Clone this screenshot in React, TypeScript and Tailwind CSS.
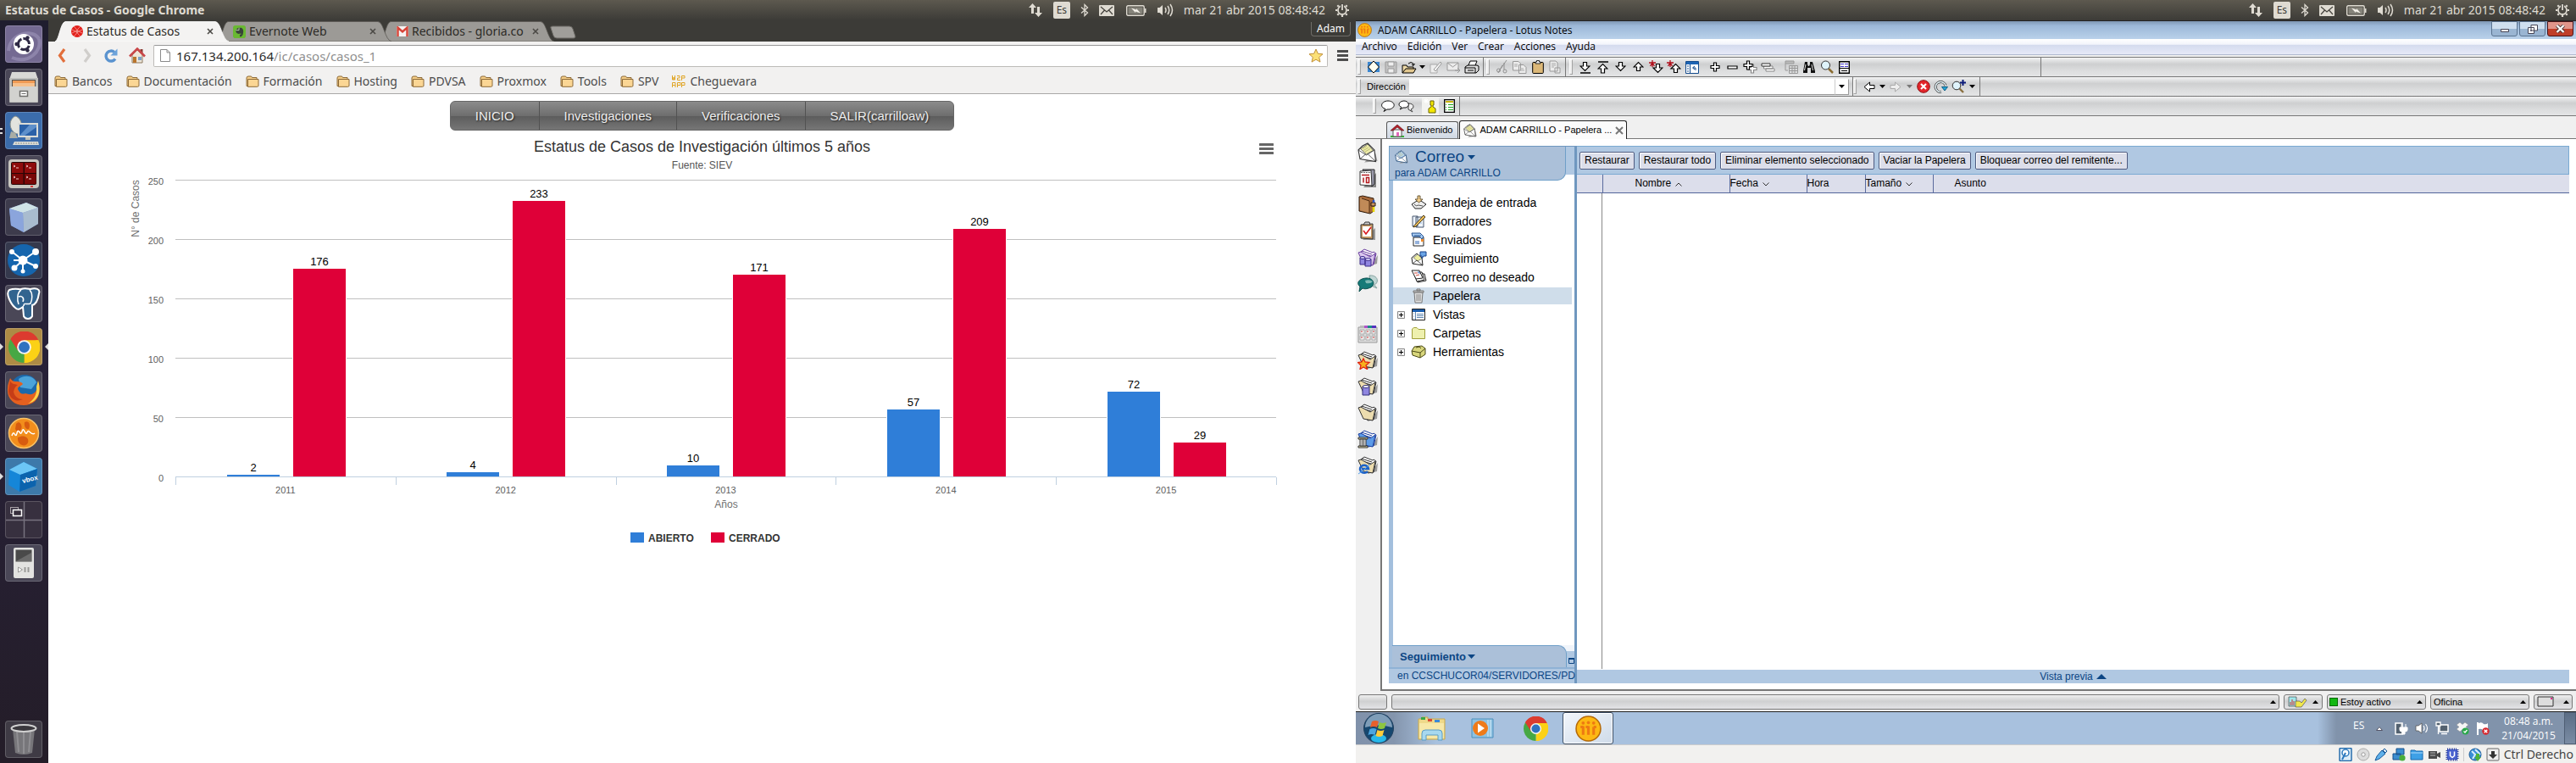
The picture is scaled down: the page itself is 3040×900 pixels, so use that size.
import React from "react";

const UBUNTU = "font-['Noto_Sans',sans-serif]";
const SEGOE = "font-['Open_Sans',sans-serif]";
const ARIAL = "font-['Liberation_Sans',Arial,sans-serif]";

type IconProps = { w?: number; h?: number; box?: string; className?: string; children: React.ReactNode };

function Icon({ w = 16, h = 16, box, className = "", children }: IconProps) {
  return (
    <svg aria-hidden="true" width={w} height={h} viewBox={box ?? `0 0 ${w} ${h}`} className={`shrink-0 ${className}`}>
      {children}
    </svg>
  );
}

/* ---------- Ubuntu top panel ---------- */

function Panel({ title }: { title?: string }) {
  return (
    <header className={`flex h-6 items-center bg-linear-to-b from-[#5d594f] to-[#3c3b37] pl-[6px] pr-2 text-[#dfdbd2] ${UBUNTU}`}>
      {title && <h1 className="whitespace-nowrap text-[14px] font-bold leading-6">{title}</h1>}
      <div className="ml-auto flex items-center">
        <Icon w={18} h={18} className="mr-3">
          <path d="M5.500 1 10 6H7v7H4V6H1zM12.500 17 8 12h3V5h3v7h3z" fill="#dfdbd2" />
        </Icon>
        <span className="mr-3 flex h-5 w-5 items-center justify-center rounded-[2px] bg-[#dfdbd2] text-[12px] leading-5 text-[#3c3b37]">Es</span>
        <Icon w={10} h={16} className="mr-3">
          <path d="M1 4.500 8.500 11 5 14.500V1.500L8.500 5 1 11.500" fill="none" stroke="#dfdbd2" strokeWidth="1.300" />
        </Icon>
        <Icon w={18} h={13} className="mr-[14px]">
          <rect width="18" height="13" rx="1" fill="#dfdbd2" />
          <path d="M2 2l7 6 7-6M2 11l4.500-5M16 11l-4.500-5" fill="none" stroke="#45433d" strokeWidth="1.200" />
        </Icon>
        <Icon w={24} h={13} className="mr-3">
          <rect x=".7" y=".7" width="20.500" height="11.600" rx="1.500" fill="none" stroke="#dfdbd2" strokeWidth="1.400" />
          <rect x="2.500" y="2.500" width="17" height="8" fill="#85837a" />
          <path d="M22 4h1.500v5H22z" fill="#dfdbd2" />
          <path d="M6 3.500l6 2V4l5 5.500-6-2V9z" fill="#f4f1ea" />
        </Icon>
        <Icon w={20} h={18} className="mr-3">
          <path d="M1 6h2.500L7 3v12l-3.500-3H1z" fill="#dfdbd2" />
          <path d="M10 6q2 3 0 6M13 4q3.500 5 0 10M16 2q5 7 0 14" fill="none" stroke="#dfdbd2" strokeWidth="1.500" />
        </Icon>
        <time className="whitespace-nowrap text-[14px] leading-6">mar 21 abr 2015 08:48:42</time>
        <Icon w={16} h={16} className="ml-3">
          <circle cx="8" cy="8" r="5" fill="none" stroke="#dfdbd2" strokeWidth="1.800" />
          <path d="M8 0v2M8 14v2M0 8h2M14 8h2M2.300 2.300l1.500 1.500M12.200 12.200l1.500 1.500M2.300 13.700l1.500-1.500M12.200 3.800l1.500-1.500" stroke="#dfdbd2" strokeWidth="2.200" />
          <path d="M8 0v8" stroke="#4a4842" strokeWidth="4" />
          <path d="M8 1v7" stroke="#dfdbd2" strokeWidth="1.800" />
        </Icon>
      </div>
    </header>
  );
}

/* ---------- Unity launcher ---------- */

function ChromeLogo({ size }: { size: number }) {
  return (
    <Icon w={size} h={size} box="0 0 40 40">
      <path d="M20 20 2.700 10A20 20 0 0 1 37.300 10z" fill="#dc3b2f" />
      <path d="M20 20 37.300 10A20 20 0 0 1 20 40z" fill="#fbd116" />
      <path d="M20 20v20A20 20 0 0 1 2.700 10z" fill="#46a844" />
      <path d="M20 11h18.300A20 20 0 0 0 2.700 10l9.500 14.500z" fill="#dc3b2f" />
      <path d="M38.300 11H20l8 13.500L20 40A20 20 0 0 0 38.300 11z" fill="#fbd116" />
      <circle cx="20" cy="20" r="9" fill="#f4f4f4" />
      <circle cx="20" cy="20" r="7" fill="#2f72c0" />
    </Icon>
  );
}

const launcher: { name: string; tile: string; mark?: "one" | "two" | "both"; art: React.ReactNode }[] = [
  {
    name: "Inicio",
    tile: "bg-[#746a92]",
    art: (
      <Icon w={44} h={44}>
        <path d="M4 30C6 8 34 4 40 16M8 38c20 8 36-8 32-22" stroke="#8d84aa" strokeWidth="4" fill="none" />
        <circle cx="22" cy="22" r="12" fill="#fff" />
        <circle cx="22" cy="22" r="6.500" fill="none" stroke="#2f2a45" strokeWidth="3" strokeDasharray="11.600 2" strokeDashoffset="-2" />
        <circle cx="13.500" cy="22" r="2.200" fill="#2f2a45" />
        <circle cx="26.500" cy="14.500" r="2.200" fill="#2f2a45" />
        <circle cx="26.500" cy="29.500" r="2.200" fill="#2f2a45" />
      </Icon>
    ),
  },
  {
    name: "Archivos",
    tile: "bg-[#4a4757]",
    art: (
      <Icon w={36} h={38}>
        <path d="M4 1h28l3 9H1z" fill="#d9d9d6" />
        <path d="M1 8h34v28q0 1-1 1H2q-1 0-1-1z" fill="#bdbdba" />
        <path d="M4 10h28v8H4z" fill="#55514d" />
        <path d="M5 11h26v7H5z" fill="#ef9a55" />
        <path d="M5 14h26v4H5z" fill="#f6c08c" />
        <path d="M2 18h32v18H2z" fill="#d2d2cf" />
        <rect x="13.500" y="23.500" width="9" height="6" fill="#fff" stroke="#6d6d6a" strokeWidth="1.500" />
        <path d="M15.500 26.500h5" stroke="#6d6d6a" />
      </Icon>
    ),
  },
  {
    name: "Escritorio remoto",
    tile: "bg-[#3b6cab]",
    mark: "two",
    art: (
      <Icon w={38} h={36}>
        <path d="M9 1c9 2 10 19 3 21C3 21-1 6 9 1z" fill="#e2e4de" stroke="#8f948c" />
        <path d="M4 19l-2 8h10l-3-6" fill="#a9ada5" />
        <rect x="12" y="9" width="24" height="17" fill="#dadcd7" />
        <rect x="14" y="11" width="20" height="13" fill="#2a61a8" />
        <path d="M14 24 26 11h8v3L20 24z" fill="#5e90cb" />
        <path d="M21 26h6v3h-6z" fill="#bcbfb9" />
        <path d="M8 31h28l1 4H6z" fill="#dbddd8" />
        <path d="M9 33h26" stroke="#8e938c" strokeDasharray="2 1" />
      </Icon>
    ),
  },
  {
    name: "Terminator",
    tile: "bg-[#4a4757]",
    art: (
      <Icon w={38} h={36}>
        <rect x="1" y="1" width="36" height="34" rx="4" fill="#c9c7c0" />
        <rect x="4" y="4" width="30" height="27" rx="2" fill="#2a0606" />
        <rect x="5" y="5" width="13.500" height="12" fill="#8e0c0c" />
        <rect x="20" y="5" width="13.500" height="12" fill="#8e0c0c" />
        <rect x="5" y="18" width="13.500" height="12" fill="#7a0707" />
        <rect x="20" y="18" width="13.500" height="12" fill="#7a0707" />
        <path d="M7 8l2 1-2 1M10 11h3M22 8l2 1-2 1M25 11h3M7 21l2 1-2 1M10 24h3M22 21l2 1-2 1M25 24h3" stroke="#f0c9c9" fill="none" />
        <path d="M27 33h3" stroke="#e01010" strokeWidth="1.500" />
      </Icon>
    ),
  },
  {
    name: "VirtualBox",
    tile: "bg-[#3d3b4c]",
    art: (
      <Icon w={36} h={38}>
        <path d="M1 9 21 2l14 6v19L18 37 3 29z" fill="#7a94cd" />
        <path d="M1 9 21 2l14 6-18 6z" fill="#cfe3e6" />
        <path d="M17 14 35 8v19L18 37z" fill="#a9bccf" />
        <path d="M1 9l16 5 1 23L3 29z" fill="#8ba5dc" />
      </Icon>
    ),
  },
  {
    name: "Vuze",
    tile: "bg-[#35394d]",
    art: (
      <Icon w={40} h={40}>
        <ellipse cx="20" cy="20" rx="19" ry="19" fill="#1565ad" />
        <path d="M19 20 5 9M19 20 35 9M19 20l15 7M19 20 8 30M19 20v13M19 20 8 20" stroke="#fff" strokeWidth="2" />
        <circle cx="19" cy="20" r="5.500" fill="#fff" />
        <circle cx="6" cy="10" r="3" fill="#fff" />
        <circle cx="34" cy="10" r="4" fill="#fff" />
        <circle cx="34" cy="27" r="3" fill="#fff" />
        <circle cx="9" cy="29" r="3.500" fill="#fff" />
        <circle cx="19" cy="33" r="2.500" fill="#fff" />
      </Icon>
    ),
  },
  {
    name: "pgAdmin",
    tile: "bg-[#4a4757]",
    art: (
      <Icon w={40} h={40}>
        <path d="M3 4c8-3 12 0 14-1 5-2 9 0 11 0 6-2 12 0 10 5-1 7-4 13-8 14v13c-2 4-8 4-10 0l-1-11c-4 3-6 4-9 1C5 21-2 8 3 4z" fill="#32648f" stroke="#fff" strokeWidth="2" />
        <path d="M17 4c-5 3-5 12-3 17M27 4c4 4 3 12 1 16-5 2-8-2-8 3M14 12c4-2 7 2 5 6" stroke="#fff" strokeWidth="1.500" fill="none" />
      </Icon>
    ),
  },
  { name: "Google Chrome", tile: "bg-[#ad8b45]", mark: "both", art: <ChromeLogo size={37} /> },
  {
    name: "Firefox",
    tile: "bg-[#4a4757]",
    art: (
      <Icon w={40} h={38}>
        <circle cx="21" cy="18" r="17" fill="#1c69ab" />
        <path d="M14 6c8-6 18-3 21 4l-6 8-13-2z" fill="#4ba3d9" />
        <path d="M37 8c6 18-4 29-17 29C8 37 0 29 1 17c0-5 2-9 3-12 2 3 4 4 6 4 4 0 7 0 9 3-3 3-6 3-6 6 2 3 3 7 9 5 5 2 10 2 13-4 2-4 3-8 2-11z" fill="#e5601f" />
        <path d="M37 8c5 17-3 25-12 27 8-5 11-12 10-20z" fill="#fbd34a" />
        <path d="M4 8c1 4 5 4 9 5-3 2-4 4-5 8 1 6 6 9 11 9-9 4-16-1-17-10z" fill="#c63d17" />
      </Icon>
    ),
  },
  {
    name: "Monitor",
    tile: "bg-[#4a4757]",
    art: (
      <Icon w={38} h={38}>
        <circle cx="19" cy="19" r="17.500" fill="#f28e1c" stroke="#f9c266" strokeWidth="1.500" />
        <path d="M10 8c4-5 8 2 6 6s-6 3-7 0zM20 6c6-3 7 4 5 8-3 1-6-3-5-8zM12 24c7-4 14 0 12 6s-13 4-12-6z" fill="#d75c10" />
        <path d="M5 22c3-9 4 5 6-3s4 5 6-2 4 6 6 1 5 5 9 1" stroke="#fff" strokeWidth="1.500" fill="none" />
      </Icon>
    ),
  },
  {
    name: "Oracle VM VirtualBox",
    tile: "bg-[#3d79aa]",
    mark: "one",
    art: (
      <Icon w={40} h={40}>
        <path d="M3 12 20 3l16 8-2 20-19 7L2 30z" fill="#1586d8" />
        <path d="M3 12 20 3l16 8-20 7z" fill="#6cc6f6" />
        <path d="M16 18 36 11l-2 20-19 7z" fill="#0c63ad" />
        <text x="19" y="28" fontSize="8" fontWeight="700" fill="#fff" fontFamily="Liberation Sans" transform="rotate(-14 19 28)">vbox</text>
      </Icon>
    ),
  },
  {
    name: "Áreas de trabajo",
    tile: "bg-[#37303f]",
    art: (
      <Icon w={44} h={44}>
        <path d="M22.500 1v42M1 22.500h42" stroke="#77727f" strokeWidth="1.500" />
        <rect x="6.500" y="7.500" width="9" height="7" fill="none" stroke="#a9a2a8" />
        <rect x="9.500" y="10.500" width="10" height="7" fill="#372f3c" stroke="#fff" strokeWidth="1.500" />
      </Icon>
    ),
  },
  {
    name: "Reproductor",
    tile: "bg-[#4a4757]",
    art: (
      <Icon w={26} h={38}>
        <rect x="1" y="1" width="24" height="36" rx="2" fill="#e3e3e1" />
        <rect x="3.500" y="3.500" width="19" height="14" fill="#4a4a4a" />
        <path d="M4 17 22 7v10z" fill="#6b6b6b" />
        <path d="M6.500 24v6l5-3z" fill="#fff" stroke="#9a9a98" />
        <path d="M14.500 24v6M18.500 24v6" stroke="#9a9a98" strokeWidth="2" />
      </Icon>
    ),
  },
];

function Launcher() {
  return (
    <nav aria-label="Lanzador" className="flex w-[57px] shrink-0 flex-col gap-[7px] bg-linear-to-b from-[#1f1d2e] via-[#272138] to-[#241d28] py-[6px]">
      {launcher.map((item) => (
        <div key={item.name} className="relative flex justify-center pr-px">
          <button
            aria-label={item.name}
            className={`flex h-11 w-11 items-center justify-center overflow-hidden rounded-[4px] shadow-[inset_0_0_0_1px_rgba(255,255,255,0.18)] ${item.tile}`}
          >
            {item.art}
          </button>
          {item.mark === "two" && <span className="absolute left-0 top-[19px] h-[7px] w-[3px] border-y-2 border-[#ddd]" />}
          {(item.mark === "one" || item.mark === "both") && (
            <Icon w={4} h={8} className="absolute left-0 top-[18px]"><path d="M0 0l4 4-4 4z" fill="#ddd" /></Icon>
          )}
          {item.mark === "both" && (
            <Icon w={4} h={8} className="absolute right-0 top-[18px]"><path d="M4 0 0 4l4 4z" fill="#ddd" /></Icon>
          )}
        </div>
      ))}
      <button aria-label="Papelera" className="mx-[6px] mt-auto flex h-11 w-11 items-center justify-center rounded-[4px] bg-[#3f3b45] shadow-[inset_0_0_0_1px_rgba(255,255,255,0.18)]">
        <Icon w={32} h={38}>
          <path d="M3 7h26l-3 28q-10 4-20 0z" fill="#77767a" />
          <path d="M8 10l2 24M16 10v26M24 10l-2 24" stroke="#8f8e92" strokeWidth="2" />
          <ellipse cx="16" cy="6" rx="14.500" ry="4" fill="#3a383d" stroke="#d0d0d0" strokeWidth="2" />
        </Icon>
      </button>
    </nav>
  );
}

/* ---------- Chrome window ---------- */

function Tab({ active, icon, title, z }: { active?: boolean; icon: React.ReactNode; title: string; z: string }) {
  return (
    <div className={`relative -mr-[13px] flex h-6 w-[205px] items-center ${z}`}>
      <svg aria-hidden="true" viewBox="0 0 205 24" preserveAspectRatio="none" className="absolute inset-0 h-full w-full">
        <path d="M0 24 C5 22 6 2 12 .5H189C196 1 197 22 205 24z" fill={active ? "#f4f3f2" : "#9c9a96"} stroke={active ? "#fff" : "#5d5b56"} strokeWidth=".8" />
      </svg>
      <div className="relative flex w-full items-center px-[18px]">
        <span className="flex w-[15px] justify-center">{icon}</span>
        <span className="ml-1 w-[137px] overflow-hidden whitespace-nowrap text-[14px] leading-6 text-[#2d2b27]">{title}</span>
        <button aria-label={`Cerrar ${title}`} className="ml-auto">
          <Icon w={8} h={8}><path d="M1 1l6 6M7 1 1 7" stroke="#4b4945" strokeWidth="1.600" /></Icon>
        </button>
      </div>
    </div>
  );
}

function Folder() {
  return (
    <Icon w={16} h={14}>
      <path d="M1 12.500V3Q1 1 3 1h3.500l1 1.500H13V12.500z" fill="#f5cd87" stroke="#8d6a38" />
      <path d="M2.500 13.300V4.500H15v7.500q0 1.300-1.500 1.300z" fill="#fbd694" stroke="#8d6a38" />
    </Icon>
  );
}

const years = [
  { year: "2011", open: 2, closed: 176 },
  { year: "2012", open: 4, closed: 233 },
  { year: "2013", open: 10, closed: 171 },
  { year: "2014", open: 57, closed: 209 },
  { year: "2015", open: 72, closed: 29 },
];

function CasesChart() {
  const left = 150;
  const base = 360;
  const step = 259.8;
  const unit = 1.4;
  return (
    <svg role="img" aria-label="Estatus de casos por año" viewBox="0 0 1543 450" className={`w-full ${ARIAL}`}>
      {[50, 100, 150, 200, 250].map((v) => (
        <line key={v} x1={left} x2={left + step * 5} y1={base - v * unit - 0.5} y2={base - v * unit - 0.5} stroke="#c0c0c0" />
      ))}
      {[0, 50, 100, 150, 200, 250].map((v) => (
        <text key={v} x="136" y={base - v * unit + 5} textAnchor="end" fontSize="11" fill="#606060">{v}</text>
      ))}
      <text x="107" y="43" textAnchor="middle" fontSize="12" fill="#707070" transform="rotate(-90 107 43)">N° de Casos</text>
      {years.map((d, i) => {
        const x = Math.floor(left + step * i) + 61;
        const ho = Math.round(d.open * unit);
        const hc = Math.round(d.closed * unit);
        return (
          <g key={d.year}>
            <rect x={x - 1} y={base - ho - 1} width="64" height={ho + 1} fill="#fff" />
            <rect x={x} y={base - ho} width="62" height={ho} fill="#2f7ed8" />
            <rect x={x + 77} y={base - hc - 1} width="64" height={hc + 1} fill="#fff" />
            <rect x={x + 78} y={base - hc} width="62" height={hc} fill="#df0038" />
            <text x={x + 31} y={base - ho - 4} textAnchor="middle" fontSize="13" fill="#000">{d.open}</text>
            <text x={x + 109} y={base - hc - 4} textAnchor="middle" fontSize="13" fill="#000">{d.closed}</text>
            <text x={left + step * (i + 0.5)} y="379" textAnchor="middle" fontSize="11" fill="#606060">{d.year}</text>
          </g>
        );
      })}
      <line x1={left} x2={left + step * 5} y1={base - 0.5} y2={base - 0.5} stroke="#c0d0e0" />
      {[0, 1, 2, 3, 4, 5].map((i) => {
        const x = Math.round(left + step * i) + 0.5;
        return <line key={i} x1={x} x2={x} y1={base} y2={base + 9} stroke="#c0d0e0" />;
      })}
      <text x="800" y="396" textAnchor="middle" fontSize="12" fill="#707070">Años</text>
      <rect x="687" y="425" width="16" height="12" fill="#2f7ed8" />
      <text x="708" y="436" fontSize="12" fontWeight="700" fill="#333">ABIERTO</text>
      <rect x="782" y="425" width="16" height="12" fill="#df0038" />
      <text x="803" y="436" fontSize="12" fontWeight="700" fill="#333">CERRADO</text>
    </svg>
  );
}

function ChromeWindow() {
  return (
    <main className={`flex min-w-0 grow flex-col bg-white ${UBUNTU}`}>
      <div className="flex h-[25px] items-end bg-[#3c3b37] pl-2">
        <Tab
          active
          z="z-30"
          title="Estatus de Casos"
          icon={
            <Icon w={14} h={14}>
              <circle cx="7" cy="7" r="7" fill="#e3211c" />
              <path d="M3 1q8 6 0 12M11 1Q3 7 11 13M1 5q6 4 12 0M1 9q6-4 12 0" stroke="#f59a94" strokeWidth=".8" fill="none" />
            </Icon>
          }
        />
        <Tab
          z="z-20"
          title="Evernote Web"
          icon={
            <Icon w={15} h={15} box="0 0 16 16">
              <rect width="16" height="16" rx="3" fill="#69b832" />
              <path d="M3.500 5.500 6.500 3h4q2.500 1 2.500 5t-2.500 6H8.500v-2.500H10V10l-2 .500Q4 11 3.500 7z" fill="#39433a" />
              <path d="M3.500 6h4V3" fill="none" stroke="#dff3c8" strokeWidth=".8" />
            </Icon>
          }
        />
        <Tab
          z="z-10"
          title="Recibidos - gloria.co"
          icon={
            <Icon w={14} h={12}>
              <rect width="14" height="12" rx="1" fill="#f6f3f2" />
              <path d="M1.500 12V1.500L7 6.500l5.500-5V12" fill="none" stroke="#d64337" strokeWidth="2.400" />
            </Icon>
          }
        />
        <button aria-label="Nueva pestaña" className="mb-[3px] ml-2">
          <Icon w={31} h={16}><path d="M1 3Q0 1 3 1h20q3 0 4 3l3 9q0 2-2 2H8q-3 0-4-3z" fill="#a09e9a" stroke="#6b6964" /></Icon>
        </button>
        <button className="mb-[6px] ml-auto mr-[6px] h-[17px] w-[47px] rounded-b-[4px] border border-t-0 border-[#6f6d68] text-[12px] leading-4 text-white">Adam</button>
      </div>
      <div className="flex h-[33px] items-center bg-[#f2f1f0] px-[9px]">
        <button aria-label="Atrás" className="ml-[2px] mr-[20px]"><Icon w={10} h={17}><path d="M8 1 2.500 8.500 8 16" fill="none" stroke="#e26f3c" strokeWidth="3.200" /></Icon></button>
        <button aria-label="Adelante" className="mr-[14px]"><Icon w={10} h={17}><path d="M2 1l5.500 7.500L2 16" fill="none" stroke="#d0cecb" strokeWidth="3.200" /></Icon></button>
        <button aria-label="Recargar" className="mr-3">
          <Icon w={18} h={18}>
            <path d="M14 12.500A6 6 0 1 1 13 4.500" fill="none" stroke="#5a93cf" strokeWidth="3.400" />
            <path d="M16.500.500v8h-8z" fill="#6da3da" />
          </Icon>
        </button>
        <button aria-label="Página principal" className="mr-[9px]">
          <Icon w={20} h={19}>
            <path d="M4 9v9h12V9l-6-6z" fill="#eee6d8" stroke="#8d7a60" />
            <path d="M13.500 2h3v5h-3z" fill="#8b3a34" />
            <path d="M1 10.500 10 1.500l9 9" fill="none" stroke="#c9484a" strokeWidth="2.600" />
            <path d="M5 11h4v7H5z" fill="#b9742c" />
            <path d="M11 11h4v4h-4z" fill="#7ca3c9" />
          </Icon>
        </button>
        <label className="flex h-[26px] min-w-0 grow items-center rounded-[2px] border border-[#bdbbb8] border-t-[#999] bg-white pl-[7px] pr-1">
          <Icon w={12} h={15}><path d="M.500.500H8l3.500 3.500v10.500H.500zM8 .500V4h3.500" fill="#fff" stroke="#8a8a8a" /></Icon>
          <span className="ml-[7px] text-[15px] leading-6 text-[#2b2b2b]">167.134.200.164</span>
          <input aria-label="Dirección web" defaultValue="/ic/casos/casos_1" className="min-w-0 grow text-[15px] leading-6 text-[#8f8f8f] outline-none" />
          <Icon w={18} h={17}><path d="M9 1l2.300 5.200 5.700.6-4.300 3.800 1.300 5.500L9 13.200l-5 2.900 1.300-5.500L1 6.800l5.700-.6z" fill="#fbe076" stroke="#c0903a" /></Icon>
        </label>
        <button aria-label="Menú" className="ml-[11px]"><Icon w={13} h={13}><path d="M0 1.500h13M0 6.500h13M0 11.500h13" stroke="#4d4d4d" strokeWidth="3" /></Icon></button>
      </div>
      <nav aria-label="Marcadores" className="flex h-[29px] items-center gap-4 border-b border-[#a9a8a7] bg-[#f2f1f0] pl-[7px] text-[14px] leading-6 text-[#4c4c4c]">
        {["Bancos", "Documentación", "Formación", "Hosting", "PDVSA", "Proxmox", "Tools", "SPV"].map((b) => (
          <a key={b} href="#" className="flex items-center gap-[5px]"><Folder />{b}</a>
        ))}
        <a href="#" className="flex items-center gap-[5px]">
          <Icon w={16} h={14}>
            <path d="M.500 0v5h1.500V2v3H3.500V0M6 .500h3v2.500H6.500V5.500H10M11.500 6V.500H15V3h-3M.500 14V8.500H4V14M.500 11.500H4M6.500 14V8.500H10v3H7M11.500 14V8.500H15v3h-3" fill="none" stroke="#e0a526" />
          </Icon>
          Cheguevara
        </a>
      </nav>
      <section className={`relative ${ARIAL}`}>
        <nav aria-label="Principal" className="mt-2 flex justify-center">
          <div className="flex divide-x divide-[#525252] overflow-hidden rounded-[6px] border border-[#666] bg-[linear-gradient(#8b8b8b_0%,#6e6e6e_50%,#5c5c5c_51%,#767676_100%)]">
            {["INICIO", "Investigaciones", "Verificaciones", "SALIR(carrilloaw)"].map((m) => (
              <a key={m} href="#" className="px-[29px] text-[15px] leading-[33px] text-[#eee] [text-shadow:1px_1px_2px_#222]">{m}</a>
            ))}
          </div>
        </nav>
        <h2 className="mt-2 text-center text-[18px] leading-[22px] text-[#333]">Estatus de Casos de Investigación últimos 5 años</h2>
        <p className="mt-[3px] text-center text-[12px] leading-4 text-[#555]">Fuente: SIEV</p>
        <button aria-label="Menú del gráfico" className="absolute right-[97px] top-[58px]">
          <Icon w={17} h={13}><path d="M1 1.500h15M1 6.500h15M1 11.500h15" stroke="#666" strokeWidth="3" strokeLinecap="round" /></Icon>
        </button>
        <CasesChart />
      </section>
    </main>
  );
}

/* ---------- Lotus Notes window ---------- */

const BAR = "flex items-stretch border-b border-[#777] bg-[linear-gradient(#f4f4f4_0%,#e2e3e4_15%,#cecfd0_35%,#dcddde_70%,#e4e5e6_100%)]";

function Grip() {
  return <span className="my-[2px] mr-1 w-1 shrink-0 border border-[#a4a4a4] border-l-white border-t-white bg-[#ececec]" />;
}

function Tool({ label, narrow, className = "", children }: { label: string; narrow?: boolean; className?: string; children: React.ReactNode }) {
  return (
    <button aria-label={label} className={`flex shrink-0 items-center justify-center ${narrow ? "w-[11px]" : "w-[21px]"} ${className}`}>
      {children}
    </button>
  );
}

function Caret({ color = "#000", up }: { color?: string; up?: boolean }) {
  return <Icon w={7} h={4}>{up ? <path d="M3.500 0 7 4H0z" fill={color} /> : <path d="M0 0h7L3.500 4z" fill={color} />}</Icon>;
}

const ARROW_DOWN = "M4.500 1.500h4V6H12L6.500 11.500 1 6h3.500z";
const ARROW_UP = "M4.500 11.500h4V7H12L6.500 1.500 1 7h3.500z";

function Outline({ d, extra, w = 13 }: { d: string; extra?: React.ReactNode; w?: number }) {
  return <Icon w={w} h={15}>{extra}<path d={d} fill="#fff" stroke="#000" strokeWidth="1.200" /></Icon>;
}

function Star() {
  return <path d="M4 0v8M0 3h8M1.500 7 4 3l2.500 4" stroke="#b0101c" strokeWidth="1.300" fill="none" />;
}

function Plus({ x, y, c = "#000" }: { x: number; y: number; c?: string }) {
  return <path transform={`translate(${x} ${y})`} d="M4.500 1h3v3.500H11v3H7.500V11h-3V7.500H1v-3h3.500z" fill="#fff" stroke={c} strokeWidth="1.200" />;
}

function Letter({ tint = "#efedaa", edge = "#333", size = 16 }: { tint?: string; edge?: string; size?: number }) {
  return (
    <Icon w={size} h={size} box="0 0 24 24">
      <path d="M8 23.500 23.500 22 21 12z" fill="#9a9a9a" />
      <path d="M1 9 6 4l6-3 8 8 1.500 13.500L3 19.500z" fill="#fff" stroke={edge} strokeWidth="1.100" />
      <path d="M3.500 7.500 12 2l6.500 7.500-8 4.500z" fill={tint} stroke={edge} strokeWidth=".7" />
      <path d="M6 7.500l5-3M7 9.500l6-3.500M9 11l6-3.500" stroke="#a8a860" strokeWidth=".7" />
      <path d="M1 9l9.500 6L20 9M3 19.500l6.500-5.500M21.500 22.500l-9-8.500" fill="none" stroke={edge} strokeWidth=".8" />
    </Icon>
  );
}

function ToolBars() {
  return (
    <div className="border-t border-[#777]">
      <div className={`h-[23px] ${BAR}`}>
        <div className="flex w-[151px] border-r border-[#777] pl-[2px]">
          <Grip />
          <Tool label="Diseño"><Icon w={16} h={16}><path d="M1 2h14v12H1z" fill="#3a86d0" /><path d="M8 1l6.500 7L8 15 1.500 8z" fill="#fffef0" stroke="#000" /></Icon></Tool>
          <Tool label="Guardar"><Icon w={15} h={15}><path d="M1 1h13v13H1z" fill="#c3c3c3" stroke="#999" /><path d="M4 1h7v5H4zM4 9h7v5H4z" fill="#eee" stroke="#999" /></Icon></Tool>
          <Tool label="Abrir"><Icon w={18} h={15}><path d="M1 14V5h5l1 2h7v2" fill="#ecd9a8" stroke="#000" /><path d="M1 14 5 9h12l-3 5z" fill="#e3c88f" stroke="#000" /><path d="M8 3q3-3 6 0v2M12 4l2 1.500L15.500 3" fill="none" stroke="#000" /></Icon></Tool>
          <Tool label="Más opciones de abrir" narrow><Caret /></Tool>
          <Tool label="Editar"><Icon w={15} h={15}><path d="M1 4h8v10H1z" fill="#eee" stroke="#aaa" /><path d="M5 10 13 1l1 2-7 9z" fill="#fafafa" stroke="#999" /></Icon></Tool>
          <Tool label="Reenviar"><Icon w={17} h={14}><path d="M1 2h13v9H1z" fill="#ececec" stroke="#999" /><path d="M1 2l6.500 5L14 2M10 11h6M13 8l3 3-3 3" fill="none" stroke="#999" /></Icon></Tool>
          <Tool label="Imprimir"><Icon w={18} h={16}><path d="M5 6 7 1h8l-2 5" fill="#fff" stroke="#000" /><path d="M1 8l3-2h11l2 1v5l-3 3H1z" fill="#ddd" stroke="#000" /><path d="M1 9h12v6M4 12h7" fill="none" stroke="#000" /></Icon></Tool>
        </div>
        <div className="flex w-[97px] border-r border-[#777] pl-[3px]">
          <Grip />
          <Tool label="Cortar"><Icon w={16} h={16}><path d="M13 0 6 10M3 15l5-9M10 3v8" stroke="#909090" fill="none" /><circle cx="3.500" cy="12" r="2" fill="none" stroke="#909090" /><circle cx="11" cy="13" r="2" fill="none" stroke="#909090" /></Icon></Tool>
          <Tool label="Copiar"><Icon w={17} h={15}><path d="M.500.500H7L9.500 3v8h-9zM7.500 4.500H13l3 3v7H7.500z" fill="#ececec" stroke="#999" /><path d="M2 4h4M2 6h4M9 9h4M9 11h5" stroke="#aaa" /></Icon></Tool>
          <Tool label="Pegar"><Icon w={14} h={16}><rect x=".7" y="2.500" width="12.600" height="13" rx="1" fill="#dcb878" stroke="#000" /><path d="M4 4V2h1.500V.500h3V2H10v2z" fill="#eee" stroke="#000" strokeWidth=".8" /></Icon></Tool>
          <Tool label="Pegado especial"><Icon w={15} h={16}><path d="M1 1h7l2 2v10H1zM7 9h6v6H7z" fill="#ececec" stroke="#999" /><path d="M3 4h5M3 6h5M3 8h3" stroke="#aaa" /></Icon></Tool>
        </div>
        <div className="flex w-[561px] border-r border-[#777] pl-1">
          <Grip />
          <Tool label="Último"><Outline d={ARROW_DOWN} extra={<path d="M1 14h12" stroke="#000" strokeWidth="1.500" />} /></Tool>
          <Tool label="Primero"><Outline d="M4.500 14h4V9H12L6.500 3.500 1 9h3.500z" extra={<path d="M1 1h12" stroke="#000" strokeWidth="1.500" />} /></Tool>
          <Tool label="Siguiente"><Outline d={ARROW_DOWN} /></Tool>
          <Tool label="Anterior"><Outline d={ARROW_UP} /></Tool>
          <Tool label="Siguiente no leído"><Icon w={17} h={16}><path transform="translate(4 3)" d={ARROW_DOWN} fill="#fff" stroke="#000" strokeWidth="1.200" /><Star /></Icon></Tool>
          <Tool label="Anterior no leído"><Icon w={17} h={16}><path transform="translate(4 3)" d={ARROW_UP} fill="#fff" stroke="#000" strokeWidth="1.200" /><Star /></Icon></Tool>
          <Tool label="Ventana" className="mr-[6px]"><Icon w={16} h={15}><path d="M.500.500h15v14H.500z" fill="#fff" stroke="#124a8c" /><path d="M1 1h14v3H1z" fill="#1d64b4" /><path d="M5.500 4v10M2 6h2M2 9h2M2 12h2M12 11V8H9M11 6 8.500 8 11 10" stroke="#124a8c" fill="none" /></Icon></Tool>
          <Tool label="Expandir"><Icon w={12} h={12}><Plus x={0} y={0} /></Icon></Tool>
          <Tool label="Contraer"><Icon w={13} h={5}><path d="M1 1h11v3H1z" fill="#fff" stroke="#000" strokeWidth="1.200" /></Icon></Tool>
          <Tool label="Expandir todo"><Icon w={17} h={16}><Plus x={5} y={4} c="#888" /><Plus x={0} y={0} /></Icon></Tool>
          <Tool label="Contraer todo" className="mr-[6px]"><Icon w={17} h={11}><path d="M6 7h10v3H6zM3.500 4H14v3H3.500z" fill="#fff" stroke="#888" /><path d="M1 1h10v3H1z" fill="#fff" stroke="#333" /></Icon></Tool>
          <Tool label="Tabla"><Icon w={16} h={16}><path d="M1 1h10v3H1z" fill="#bbb" stroke="#999" /><path d="M1 4v8h3M5.500 6.500h10v9h-10zM9 6v9M12 6v9M5 9.500h10M5 12.500h10" fill="none" stroke="#999" /></Icon></Tool>
          <Tool label="Buscar"><Icon w={15} h={15}><path d="M3 1h3v3l1 2h1l1-2V1h3l3 11v2h-5V8H6v6H1v-2z" fill="#111" /><path d="M4 4 2.500 11M11 4l1.500 7" stroke="#ddd" /></Icon></Tool>
          <Tool label="Búsqueda"><Icon w={16} h={16}><path d="M10 10l5 5" stroke="#8a6c30" strokeWidth="2.500" /><circle cx="6.500" cy="6" r="5" fill="#dff3fb" stroke="#333" /></Icon></Tool>
          <Tool label="Propiedades"><Icon w={13} h={15}><path d="M.700.700h11.600v13.600H.700z" fill="#fff" stroke="#000" strokeWidth="1.400" /><path d="M2 3.500h4M7 3.500h4M2 6.500h4M7 6.500h4" stroke="#4236c8" /><path d="M1 8.500h11" stroke="#000" /><path d="M3 11.500h7" stroke="#000" /></Icon></Tool>
        </div>
      </div>
      <div className={`h-[23px] ${BAR}`}>
        <div className="flex w-[587px] items-center border-r border-[#777] pl-[2px]">
          <span className="flex self-stretch"><Grip /></span>
          <label htmlFor="direccion" className={`ml-[3px] w-[50px] text-[11px] leading-5 text-black ${ARIAL}`}>Dirección</label>
          <input id="direccion" className="h-[19px] min-w-0 grow border-b border-[#999] bg-white px-1 text-[12px] outline-none" />
          <button aria-label="Mostrar direcciones" className="mr-1 flex h-[19px] w-[17px] items-center justify-center border border-[#999] border-l-[#ccc] border-t-transparent bg-white"><Caret /></button>
        </div>
        <div className="flex w-[150px] border-r border-[#777]">
          <Grip />
          <Tool label="Atrás"><Icon w={15} h={13}><path d="M14 4.500v4H8.500V12L2 6.500 8.500 1v3.500z" fill="#fff" stroke="#000" /></Icon></Tool>
          <Tool label="Historial atrás" narrow><Caret /></Tool>
          <Tool label="Adelante"><Icon w={15} h={13}><path d="M1 4.500v4h5.500V12L13 6.500 6.500 1v3.500z" fill="#eee" stroke="#aaa" /></Icon></Tool>
          <Tool label="Historial adelante" narrow><Caret color="#777" /></Tool>
          <Tool label="Detener"><Icon w={16} h={16}><circle cx="8" cy="8" r="7.300" fill="#e3262b" stroke="#8f1114" /><path d="M5 5l6 6M11 5l-6 6" stroke="#fff" strokeWidth="2.200" /></Icon></Tool>
          <Tool label="Actualizar"><Icon w={17} h={16}><path d="M9 14.500A6 6 0 1 1 14 7" fill="none" stroke="#333" strokeWidth="3" /><path d="M9 14.500A6 6 0 1 1 14 7" fill="none" stroke="#e6f5fa" strokeWidth="1.500" /><path d="M9.500 8.500h7L13 13z" fill="#27a5d8" stroke="#0c5f86" /></Icon></Tool>
          <Tool label="Zoom"><Icon w={17} h={16}><path d="M9 10l5 5" stroke="#8a7040" strokeWidth="2.400" /><circle cx="6" cy="7" r="4.800" fill="#dff3fb" stroke="#333" /><path d="M13.500 0v7M10 3.500h7" stroke="#0b1a78" strokeWidth="2" /></Icon></Tool>
          <Tool label="Opciones de zoom" narrow><Caret /></Tool>
        </div>
      </div>
      <div className={`h-[23px] ${BAR}`}>
        <div className="flex w-[123px] items-center border-r border-[#777] pl-[20px]">
          <span className="flex self-stretch"><Grip /></span>
          <Tool label="Chat"><Icon w={17} h={14}><path d="M5 10.500C-3 8 1 1 8 1s11 7 2 10H7l-4 2.500z" fill="#fff" stroke="#111" /></Icon></Tool>
          <Tool label="Chats"><Icon w={19} h={15}><path d="M12 4q6 0 6 4 0 2-3 3l2 3-5-3z" fill="#eee" stroke="#444" /><path d="M4 8.500C-2 6 2 1 7 1s8 6 2 8H6l-4 2z" fill="#fff" stroke="#111" /></Icon></Tool>
          <button aria-label="Estado" className="ml-2 mr-[6px] flex h-[21px] w-5 items-center justify-center bg-[#f3f3f0]">
            <Icon w={16} h={18}><path d="M3 0v6M0 3h6M1 1l4 4M5 1 1 5" stroke="#fff" /><path d="M8 3h4v5h-1v2l3 2v5H6v-5l3-2V8H8z" fill="#f4e800" stroke="#6b6500" /></Icon>
          </button>
          <button aria-label="Lista"><Icon w={13} h={16}><path d="M.700.700h11.600v14.600H.700z" fill="#fff" stroke="#000" strokeWidth="1.300" /><path d="M2 3h9" stroke="#c8b400" strokeWidth="2" /><path d="M2 6.500h1M5 6.500h6M2 9.500h1M5 9.500h6M2 12.500h1M5 12.500h6" stroke="#1ba31b" /></Icon></button>
        </div>
      </div>
    </div>
  );
}

function FilesBase({ c = "#ecdcae", edge = "#333", children }: { c?: string; edge?: string; children?: React.ReactNode }) {
  return (
    <Icon w={24} h={22}>
      <path d="M16 20l7-2 1-10z" fill="#9a9a9a" />
      <path d="M4 4 8 1l10 4 1-1 3 2-3 13-7 1z" fill="#fff" stroke={edge} />
      <path d="M6 6l10 3M5 3l12 4" stroke={edge} />
      <path d="M1 5l3-1 11 6 6-4-3 14-11-2z" fill={c} stroke={edge} />
      {children}
    </Icon>
  );
}

const sideIcons: { name: string; art: React.ReactNode }[] = [
  { name: "Correo", art: <Letter size={24} /> },
  { name: "Calendario", art: <Icon w={22} h={23}><path d="M6 22h15V5z" fill="#888" /><path d="M5 1h14v17l-3 3z" fill="#99a" stroke="#222" /><path d="M2 3 15 2l1 18-14-1z" fill="#fff" stroke="#333" /><path d="M3 4.500h11" stroke="#333" strokeDasharray="1 1" /><path d="M4 7.500h9" stroke="#b3181d" strokeWidth="1.500" /><path d="M6 10.500v6M9.500 10.500h3v6h-3z" fill="none" stroke="#b3181d" strokeWidth="1.500" /></Icon> },
  { name: "Contactos", art: <Icon w={22} h={23}><path d="M1 2 5 1l13 3v15l-4 3L1 19z" fill="#a8693a" stroke="#2f1c0c" /><path d="M2 3l11 4v14L2 18z" fill="#c08a58" /><path d="M4 4l9 3v14" stroke="#4d2c12" fill="none" /><path d="M15 9h5v4h-5z" fill="#c89464" stroke="#2f1c0c" /><path d="M18 14v6" stroke="#e7d900" strokeWidth="2.500" /><path d="M18 6v3" stroke="#2a55c8" strokeWidth="2.500" /></Icon> },
  { name: "Tareas", art: <Icon w={20} h={23}><path d="M4 22h15V8z" fill="#999" /><path d="M2 4 16 3v18L2 20z" fill="#c59a64" stroke="#333" /><path d="M4 6h10v12H4z" fill="#fff" /><path d="M5 4 7 1h5l1 3z" fill="#ccc" stroke="#333" /><path d="M5 11l3 4 6-8" stroke="#d8161c" strokeWidth="1.600" fill="none" /></Icon> },
  { name: "Duplicación", art: <FilesBase c="#d9c6ee" edge="#6b3fa0"><path d="M3 11h6v8H3zM9 13h7v8H9z" fill="#8f86e0" stroke="#3b2a88" /><ellipse cx="6" cy="11" rx="3" ry="1.500" fill="#cfc9f7" stroke="#3b2a88" /><ellipse cx="12.500" cy="13" rx="3.500" ry="1.500" fill="#cfc9f7" stroke="#3b2a88" /></FilesBase> },
  { name: "Sametime", art: <Icon w={24} h={22}><path d="M14 1c10-1 12 8 6 11l3 4-7-3z" fill="#bfd5d3" stroke="#86a3a1" /><path d="M11 4c9 0 11 10 2 12-3 1-5 1-7 0l-4 4 1-6C-3 9 4 4 11 4z" fill="#157a78" stroke="#0c4f4e" /><path d="M9 7q5-2 9 1-2 3-8 2z" fill="#7fb9b5" /></Icon> },
  { name: "Espacio de trabajo", art: <Icon w={24} h={22}><path d="M1 3h22v18H1z" fill="#dcdcdc" stroke="#999" /><path d="M3 1h5v3H3z" fill="#b9b9b9" /><path d="M8 1h4v3H8z" fill="#b054c9" /><path d="M12 1h5v3h-5z" fill="#1d8c8a" /><path d="M17 1h5v3h-5z" fill="#5531c0" /><path d="M3 6h5v5H3zM10 6h5v5h-5zM17 6h4v5h-4zM3 13h5v5H3zM10 13h5v5h-5zM17 13h4v5h-4z" fill="#f2f2f2" stroke="#aaa" /><path d="M4 8h2M11 8h2M18 8h2M4 15h2M11 15h2M18 15h2" stroke="#c33" /></Icon> },
  { name: "Favoritos", art: <FilesBase><path d="M7 9l2 4 5 .500-4 3.500 1.500 4.500L7 19l-4 2.500L4 17 .500 13.500 5 13z" fill="#f7b11c" stroke="#e0220f" strokeWidth="1.300" /></FilesBase> },
  { name: "Bases de datos", art: <FilesBase><path d="M6 11h8v10H6z" fill="#8f86e0" stroke="#33307a" /><ellipse cx="10" cy="11" rx="4" ry="1.500" fill="#fff" stroke="#33307a" /></FilesBase> },
  { name: "Más marcadores", art: <FilesBase /> },
  { name: "Historial", art: <FilesBase c="#5c9be8" edge="#1c3fa0"><path d="M1 9h11v2H1zM1 19h11v2H1z" fill="#e9dfae" stroke="#333" /><path d="M3 11h7v8H3z" fill="#ddd" stroke="#333" /><path d="M5.500 11v8M7.500 11v8" stroke="#555" /></FilesBase> },
  { name: "Internet Explorer", art: <FilesBase><path d="M12 18a5 4.500 0 1 1 1-3H5" fill="none" stroke="#1c62c8" strokeWidth="2.600" /><path d="M1 21Q8 17 15 9" fill="none" stroke="#4d9bea" /></FilesBase> },
];

const folders: { label: string; expand?: boolean; selected?: boolean; art: React.ReactNode }[] = [
  { label: "Bandeja de entrada", art: <><path d="M1 11l6-4h5l6 4-6 5H5z" fill="#eee" stroke="#222" /><path d="M4 11q2 3 5 1l5 1" fill="none" stroke="#555" /><path d="M8 1h3v4h3L9.500 9 5 5h3z" fill="#f4cf8c" stroke="#6a5a3a" /></> },
  { label: "Borradores", art: <><path d="M2 3h6v12H2zM6 4h9v12H6z" fill="#eef4fb" stroke="#44546c" /><path d="M7 8h6M7 11h6" stroke="#8fb0d6" /><path d="M3 15 15 2l2 2L6 15l-3 1z" fill="#eec05c" stroke="#4a3a1a" /></> },
  { label: "Enviados", art: <><path d="M3 6h12v10H3z" fill="#fff" stroke="#222" /><path d="M1 1h10l4 4-2 3-3-3H2zM4 4h8" fill="#a9cdf3" stroke="#23508f" /><path d="M5 11h5M5 13h5" stroke="#2b64b8" /><path d="M12 8h3v3h-3z" fill="#f08a2a" /></> },
  { label: "Seguimiento", art: <><path d="M1 8 7 3l6 5 1 9-12-2z" fill="#fff" stroke="#222" /><path d="M3 8l5-4 5 5-5 3z" fill="#eeeea0" stroke="#666" strokeWidth=".7" /><path d="M2 15l5-4 7 6" fill="none" stroke="#222" strokeWidth=".8" /><path d="M11 1h7v5h-3l-2 3V6h-2z" fill="#6ba5e6" stroke="#17428a" /></> },
  { label: "Correo no deseado", art: <><path d="M6 5h10l2 8-10 2z" fill="#fff" stroke="#222" /><path d="M3 3h10l3 9-9 2z" fill="#fff" stroke="#222" /><path d="M1 1h9l4 9-8 1z" fill="#fff" stroke="#222" /><path d="M4 4h4M6 7l4-1" stroke="#d04a3c" /><path d="M8 3h2v2" stroke="#2b64b8" fill="none" /></> },
  { label: "Papelera", selected: true, art: <><path d="M4 5h10l-1 12H5z" fill="#e2e2e2" stroke="#777" /><path d="M3 3h12v2H3zM7 1h4v2H7z" fill="#ccc" stroke="#777" /><path d="M7 7v8M9 7v8M11 7v8" stroke="#888" /></> },
  { label: "Vistas", expand: true, art: <><path d="M1.500 2.500h15v13h-15z" fill="#fff" stroke="#222" /><path d="M2 3h14v3H2z" fill="#1b5fb0" /><path d="M5.500 6v9M3 8h1M3 11h1M3 14h1M7 8.500h8M7 10.500h8M7 12.500h8" stroke="#5e86b0" /></> },
  { label: "Carpetas", expand: true, art: <path d="M1.500 15.500V4l2-1.500H7l2 2h7.500v11z" fill="#eef0ae" stroke="#a0a03a" /> },
  { label: "Herramientas", expand: true, art: <><path d="M1 8l3-5 9-1 4 3v7l-6 4-9-3z" fill="#d8d67c" stroke="#4b4a18" /><path d="M1 8l10 2 6-5M11 10v6M6 4l4-1 2 2" fill="none" stroke="#4b4a18" /></> },
];

function NavigatorPane() {
  return (
    <aside className={`flex w-[222px] shrink-0 flex-col border-r-[3px] border-t border-[#6f97bf] bg-[#a9c4e0] text-[#0b4584] ${ARIAL}`}>
      <div className="flex bg-[linear-gradient(#b0c8e2_33px,#fff_33px)]">
        <div className="h-10 w-[209px] rounded-br-[10px] border-b border-l border-r border-[#6f9fc8] bg-[#abc0d9] pl-[6px]">
          <div className="flex h-6 items-center">
            <Letter tint="#bcd9f2" edge="#123f70" />
            <span className="ml-2 text-[19px] leading-6">Correo</span>
            <Icon w={9} h={5} className="ml-1"><path d="M0 0h9L4.500 5z" fill="#0b4584" /></Icon>
          </div>
          <p className="text-[12px] leading-[15px]">para ADAM CARRILLO</p>
        </div>
      </div>
      <div className="flex grow flex-col border-l-[5px] border-[#a3bfdd] bg-white pt-[16px] text-black">
        <ul>
          {folders.map((f) => (
            <li key={f.label} className="h-[22px]">
              <a href="#" className={`mr-[3px] flex h-5 items-center pl-[5px] ${f.selected ? "bg-[#cfddea]" : ""}`}>
                <span className="flex w-4">
                  {f.expand && <Icon w={9} h={9}><path d="M.500.500h8v8h-8z" fill="#f4f4f4" stroke="#888" /><path d="M2 4.500h5M4.500 2v5" stroke="#000" /></Icon>}
                </span>
                <Icon w={19} h={18}>{f.art}</Icon>
                <span className="ml-[7px] text-[14px] leading-5">{f.label}</span>
              </a>
            </li>
          ))}
        </ul>
      </div>
      <div className="flex h-[26px] items-stretch border-l-4 border-[#a3bfdd] bg-[linear-gradient(#f0f4fa_7px,#b0c8e2_7px)]">
        <button className="flex w-[206px] items-center rounded-tr-[10px] border-r border-t border-[#6f9fc8] bg-[#abc0d9] pl-[9px] text-[13px] font-bold">
          Seguimiento
          <Icon w={9} h={5} className="ml-[2px]"><path d="M0 0h9L4.500 5z" fill="#0b4584" /></Icon>
        </button>
        <button aria-label="Restaurar panel" className="ml-[2px] self-end pb-1"><Icon w={7} h={7}><path d="M.500 1h6v5.500h-6z" fill="none" stroke="#0b4584" /><path d="M0 1h7" stroke="#0b4584" strokeWidth="2" /></Icon></button>
      </div>
      <p className="h-[19px] whitespace-nowrap border-t-2 border-[#8fb2d6] bg-[#b0c8e2] pl-[10px] text-[12px] leading-[16px]">en CCSCHUCOR04/SERVIDORES/PD</p>
    </aside>
  );
}

function SortMark({ up }: { up?: boolean }) {
  return <Icon w={8} h={5} className="ml-[5px] inline-block align-middle"><path d={up ? "M.500 4.500 4 1l3.500 3.500" : "M.500.500 4 4 7.500.500"} fill="none" stroke="#333" /></Icon>;
}

function ViewPane() {
  const th = "h-[21px] border-r border-[#5a6a9c] p-0 text-left font-normal";
  return (
    <section className={`mr-2 flex min-w-0 grow flex-col ${ARIAL}`}>
      <div className="flex h-[34px] items-center gap-[5px] border-b border-r border-t border-[#7aaad2] bg-[#b0c8e2] pl-[3px]">
        {["Restaurar", "Restaurar todo", "Eliminar elemento seleccionado", "Vaciar la Papelera", "Bloquear correo del remitente..."].map((b) => (
          <button key={b} className="h-[21px] whitespace-nowrap rounded-[2px] border border-[#4e5a80] bg-[#dcdeea] px-[5px] text-[12px] leading-[18px] text-black shadow-[inset_1px_1px_0_#fff]">{b}</button>
        ))}
      </div>
      <table className="w-full table-fixed border-collapse border-b border-[#52649a] bg-[#dcdeeb] text-[12px] leading-5 text-black">
        <colgroup>
          <col className="w-[30px]" /><col className="w-[150px]" /><col className="w-[91px]" /><col className="w-[69px]" /><col className="w-[80px]" /><col />
        </colgroup>
        <thead>
          <tr>
            <th aria-label="Marca" className={th} />
            <th className={`${th} pl-[38px]`}>Nombre<SortMark up /></th>
            <th className={th}>Fecha<SortMark /></th>
            <th className={th}>Hora</th>
            <th className={th}>Tamaño<SortMark /></th>
            <th className="p-0 pl-[25px] text-left font-normal">Asunto</th>
          </tr>
        </thead>
      </table>
      <div className="mb-px w-[30px] grow border-r border-[#888]" />
      <button className="flex h-4 items-center justify-center gap-1 bg-[#b0c8e2] text-[12px] leading-4 text-[#0b4584]">
        Vista previa
        <Icon w={12} h={6}><path d="M6 0l6 6H0z" fill="#0b4584" /></Icon>
      </button>
    </section>
  );
}

const STATUS = "flex h-[18px] items-center rounded-[3px] border border-[#777] bg-[linear-gradient(#efefef,#cfd0d1_45%,#e3e3e6)]";

function StatusSelect({ label, value, lead }: { label: string; value: string; lead?: React.ReactNode }) {
  return (
    <div className={`${STATUS} w-[117px] px-[3px]`}>
      {lead}
      <select aria-label={label} className="min-w-0 grow appearance-none bg-transparent text-[11px] leading-4 text-black outline-none">
        <option>{value}</option>
      </select>
      <Caret up />
    </div>
  );
}

function NotesLogo({ size }: { size: number }) {
  return (
    <Icon w={size} h={size} box="0 0 30 30">
      <circle cx="15" cy="15" r="14" fill="#fdb813" stroke="#b56a09" strokeWidth="1.500" />
      <path d="M9 12v10M15 12v10M21 13v9M6 13h3M12 13h3M21 13h3" stroke="#ee7a12" strokeWidth="3" />
      <circle cx="9" cy="8.500" r="1.800" fill="#ee7a12" />
      <circle cx="15" cy="8" r="1.800" fill="#ee7a12" />
      <circle cx="21" cy="8.500" r="1.800" fill="#ee7a12" />
    </Icon>
  );
}

function TaskBar() {
  return (
    <footer className={`flex h-[40px] items-stretch border-b border-t border-b-[#ccc] border-t-[#222] bg-[linear-gradient(90deg,#8091aa_0px,#8495ad_45px,#a8c1de_95px)] ${SEGOE}`}>
      <button aria-label="Inicio" className="ml-[9px] mr-[28px] flex items-center">
        <Icon w={36} h={36}>
          <circle cx="18" cy="18" r="17.500" fill="#16476f" stroke="#23405e" />
          <path d="M2 17a16 16 0 0 1 32 0q-16-5-32 0z" fill="#7f9db8" />
          <ellipse cx="18" cy="30" rx="9" ry="5" fill="#28b8ea" />
          <path d="M10 10q4-2 8 0l-2 7q-4-2-8 0z" fill="#e8602c" />
          <path d="M19 11q4 2 8 0l-2 7q-4 2-8 0z" fill="#8dc63f" />
          <path d="M7.500 19q4-2 8 0l-2 7q-4-2-8 0z" fill="#4aa5e0" />
          <path d="M16.500 20q4 2 8 0l-2 7q-4 2-8 0z" fill="#fccc3b" />
        </Icon>
      </button>
      <button aria-label="Explorador" className="mr-[30px] flex items-center">
        <Icon w={33} h={30}>
          <path d="M1 28V4h4V2h7v2h20v24z" fill="#eed98a" stroke="#c8a950" />
          <path d="M4 2h5v3H4z" fill="#3aa845" /><path d="M12 4h5v3h-5z" fill="#d94a34" /><path d="M20 5h6v3h-6z" fill="#3b8ad8" />
          <path d="M2 9h29v18H2z" fill="#f7e8a8" />
          <path d="M5 29v-8q0-4 4-4h16q4 0 4 4v8h-5v-6H10v6z" fill="#a7d8ef" stroke="#5a9cc4" />
        </Icon>
      </button>
      <button aria-label="Reproductor" className="mr-[34px] flex items-center">
        <Icon w={28} h={28}>
          <path d="M1 3h25v22H1z" fill="#8fc2e2" stroke="#4d90bd" /><path d="M20 4v20M23 4v20" stroke="#d7ecf8" />
          <circle cx="11" cy="14" r="9" fill="#ef7b1a" /><path d="M8 8.500v11l8-5.500z" fill="#fff" />
        </Icon>
      </button>
      <button aria-label="Chrome" className="mr-[17px] flex items-center"><ChromeLogo size={29} /></button>
      <button aria-label="Lotus Notes" className="flex w-[60px] items-center justify-center rounded-[3px] border border-[#3d4f66] bg-linear-to-br from-[#f2f6fb] to-[#cfdbe9] shadow-[inset_0_0_0_1px_#fff]"><NotesLogo size={31} /></button>
      <div className="ml-auto flex items-center bg-[linear-gradient(90deg,#a8c1de,#8193ab_22px)] pl-[42px] text-[12px] text-white">
        <span className="mb-[6px] w-[27px] leading-4">ES</span>
        <button aria-label="Iconos ocultos" className="mr-[6px] w-4"><Icon w={8} h={5}><path d="M4 .500 7.500 4.500h-7z" fill="#fff" stroke="#556" /></Icon></button>
        <div className="flex gap-2">
          <Icon><path d="M1 2h8v13H1z" fill="#53616f" stroke="#fff" strokeWidth="1.500" /><path d="M8 3v4M13 3v4M6 7h9v3q0 2-3 2v3H9v-3q-3 0-3-2z" fill="#fff" stroke="#fff" /></Icon>
          <Icon><path d="M1 5h3l4-3v12l-4-3H1z" fill="#fff" stroke="#555" strokeWidth=".8" /><path d="M10 5q2 3 0 6M12.500 3q4 5 0 10" fill="none" stroke="#fff" strokeWidth="1.200" /></Icon>
          <Icon><path d="M5 4h10v8H5zM7 14.500h7" fill="#53616f" stroke="#fff" strokeWidth="1.500" /><path d="M1 1h5v4H1zM3.500 5v10" fill="#53616f" stroke="#fff" strokeWidth="1.300" /></Icon>
          <Icon><path d="M1 4l4-3 3 2.500L11 1l4 3-3 2.500L15 9l-4 3-3-2.500L5 12 1 9l3-2.500z" fill="#f6f6f6" stroke="#888" strokeWidth=".5" /><circle cx="11.500" cy="11.500" r="4" fill="#2aa84a" /><path d="M9.500 11.500l1.500 1.500 2.500-3" stroke="#fff" strokeWidth="1.300" fill="none" /></Icon>
          <Icon><path d="M2 1v15" stroke="#fff" strokeWidth="2" /><path d="M3 2q4-2 6 1 3 1 5-1v8q-3 2-6 0-2-2-5-1z" fill="#fff" /><circle cx="11.500" cy="11.500" r="4.200" fill="#d8262c" /><path d="M9.700 9.700l3.600 3.600M13.300 9.700l-3.600 3.600" stroke="#fff" strokeWidth="1.400" /></Icon>
        </div>
        <time className="ml-[12px] w-[68px] whitespace-nowrap text-center leading-[17px]">08:48 a.m.<br />21/04/2015</time>
        <button aria-label="Mostrar escritorio" className="ml-2 h-full w-[14px] border border-[#4f5f75] bg-linear-to-b from-[#5c6e86] to-[#7a8ca4]" />
      </div>
    </footer>
  );
}

function VmStatus() {
  return (
    <footer className={`flex h-[21px] items-center justify-end gap-[5px] bg-[#f2f1ef] pr-[3px] text-[#444] ${UBUNTU}`}>
      <Icon><rect x="1" y=".5" width="14" height="15" rx="1" fill="#dcecf8" stroke="#1d66a8" strokeWidth="1.400" /><circle cx="8" cy="6" r="4" fill="#fff" stroke="#2b78bd" strokeWidth="1.500" /><path d="M4 14l4-8" stroke="#2b78bd" strokeWidth="2" /></Icon>
      <Icon><circle cx="8" cy="8" r="7" fill="#ddd" stroke="#aaa" /><circle cx="8" cy="8" r="2.200" fill="#fff" stroke="#999" /></Icon>
      <Icon><path d="M1 15l2-5 6-7 4 4-7 6z" fill="#5fb1ea" stroke="#17599a" /><path d="M10 3l2-2 3 3-2 2z" fill="#d8e8f4" stroke="#17599a" /></Icon>
      <Icon><path d="M5 1h9v7H5zM1 7h9v7H1z" fill="#3c8ed0" stroke="#174f88" /><circle cx="12" cy="12" r="3.600" fill="#4aae3b" /></Icon>
      <Icon><path d="M1 3h5l1 1h8v10H1z" fill="#3ea0e6" stroke="#1769ad" /><path d="M1 6h14" stroke="#a9d9fa" /></Icon>
      <Icon><path d="M1 4h10v9H1zM11 7l4-2v7l-4-2z" fill="#4a4a4a" /><path d="M3 6h6M3 9h6" stroke="#bbb" /></Icon>
      <Icon><rect x="2" y="2" width="12" height="12" fill="#3f58c4" stroke="#24389a" strokeDasharray="1 1" strokeWidth="3" /><rect x="2.500" y="2.500" width="11" height="11" fill="#4a62cf" /><path d="M5.500 4.500v5l2.500 2 2.500-2v-5" fill="none" stroke="#fff" strokeWidth="1.500" /></Icon>
      <span className="h-4 border-r border-[#ccc]" />
      <Icon><circle cx="8" cy="8" r="7" fill="#3a8fd8" stroke="#1c5c98" /><path d="M4 4l4 4-3 5M8 2l6 6" stroke="#d8eefc" strokeWidth="2" fill="none" /><path d="M9 7h4v4h2l-4 5-4-5h2z" fill="#4fb33c" /></Icon>
      <Icon><rect x="1" y="1" width="14" height="14" rx="1" fill="#eee" stroke="#666" /><path d="M6 4h4v4h3l-5 5-5-5h3z" fill="#333" /></Icon>
      <span className="whitespace-nowrap text-[14px] leading-5">Ctrl Derecho</span>
    </footer>
  );
}

function NotesWindow() {
  return (
    <main className="flex min-w-0 grow flex-col bg-[#f0f0f0]">
      <div className={`flex h-[22px] items-center border-t border-[#222] bg-[linear-gradient(#7f97b3,#9cb8d8_25%,#b9d1ea)] pl-[2px] pr-[3px] ${SEGOE}`}>
        <NotesLogo size={17} />
        <h1 className="ml-[7px] text-[12px] leading-5 text-black">ADAM CARRILLO - Papelera - Lotus Notes</h1>
        <div className="ml-auto flex gap-[2px] self-start">
          <button aria-label="Minimizar" className="flex h-[18px] w-[31px] items-center justify-center rounded-b-[3px] border border-[#5a7390] bg-[linear-gradient(#cfdfef_50%,#9ab5d2_50%)] pt-1"><Icon w={10} h={4}><path d="M.500.500h9v3h-9z" fill="#fff" stroke="#445" /></Icon></button>
          <button aria-label="Restaurar" className="flex h-[18px] w-[31px] items-center justify-center rounded-b-[3px] border border-[#5a7390] bg-[linear-gradient(#cfdfef_50%,#9ab5d2_50%)]"><Icon w={12} h={11}><path d="M4 .500h7.500v6.500H4zM.500 3.500h7v7h-7z" fill="#fff" stroke="#445" /><path d="M3 6h2v2H3z" fill="#667" /></Icon></button>
          <button aria-label="Cerrar" className="flex h-[18px] w-[31px] items-center justify-center rounded-b-[3px] border border-[#4a1418] bg-[linear-gradient(#e0958a_50%,#bf3f2a_50%)]"><Icon w={11} h={10}><path d="M1.500 1l8 8M9.500 1l-8 8" stroke="#433" strokeWidth="4" /><path d="M1.500 1l8 8M9.500 1l-8 8" stroke="#fff" strokeWidth="2.400" /></Icon></button>
        </div>
      </div>
      <nav aria-label="Menú" className={`mb-[2px] flex h-[19px] items-center gap-3 border-b border-[#b0b9cf] bg-[linear-gradient(#fff_0%,#f2f4fb_35%,#d4dbee_40%,#e6e9f8_100%)] pl-[7px] text-[12px] text-black ${SEGOE}`}>
        {["Archivo", "Edición", "Ver", "Crear", "Acciones", "Ayuda"].map((m) => (
          <button key={m} className="leading-[18px]">{m}</button>
        ))}
      </nav>
      <ToolBars />
      <div className={`flex h-[27px] items-end border-b border-[#777] pl-9 text-[11px] text-black ${ARIAL}`}>
        <button className="mr-px flex h-[20px] items-center rounded-t-[3px] border border-b-0 border-[#555] bg-linear-to-b from-[#eef1f5] to-[#cfd8e3] pl-1 pr-[6px]">
          <Icon><path d="M0 14h16v2H0z" fill="#35b335" /><path d="M3 7h10v8H3z" fill="#fff" stroke="#555" /><path d="M0 8 8 1l8 7h-3L8 4 3 8z" fill="#b3202a" stroke="#5d0d12" strokeWidth=".6" /><path d="M7 10h3v5H7z" fill="#e067b8" /></Icon>
          <span className="ml-[3px]">Bienvenido</span>
        </button>
        <button className="-mb-px flex h-[22px] items-center rounded-t-[3px] border border-b-0 border-[#222] bg-[#fbfbfb] pl-1 pr-[3px]">
          <Letter />
          <span className="ml-[3px]">ADAM CARRILLO - Papelera ...</span>
          <Icon w={10} h={10} className="ml-1"><path d="M1 1l8 8M9 1 1 9" stroke="#777" strokeWidth="2" /></Icon>
        </button>
      </div>
      <div className="flex grow">
        <nav aria-label="Marcadores de Notes" className="flex w-[31px] shrink-0 flex-col items-center border-r-2 border-[#777] pr-px">
          {sideIcons.map((s, i) => (
            <button key={s.name} aria-label={s.name} className={`flex h-[31px] items-center ${i === 6 ? "mt-7" : ""}`}>{s.art}</button>
          ))}
        </nav>
        <div className="flex min-w-0 grow border-b-2 border-[#777] bg-white pb-[7px] pl-2 pt-2">
          <NavigatorPane />
          <ViewPane />
        </div>
      </div>
      <div className={`flex h-[24px] items-center gap-[5px] pl-[3px] pr-1 pt-px ${ARIAL}`}>
        <div className={`${STATUS} w-[34px]`} />
        <div className={`${STATUS} grow justify-end pr-[3px]`}><Caret up /></div>
        <button aria-label="Acceso" className={`${STATUS} w-[46px] justify-between px-1`}>
          <Icon w={24} h={14}><path d="M1 1h9v11H1z" fill="#9fe6ea" stroke="#333" strokeWidth=".6" /><path d="M3 11V7M5 11V4M7 11V6" stroke="#c33" /><path d="M9 6h5l2 2 4-5 2 2-6 8H9z" fill="#f1e84a" stroke="#555" strokeWidth=".7" /></Icon>
          <Caret up />
        </button>
        <StatusSelect label="Estado" value="Estoy activo" lead={<span className="mr-1 h-2 w-2 bg-[#13b713] shadow-[0_0_0_1px_#086b08]" />} />
        <StatusSelect label="Lugar" value="Oficina" />
        <button aria-label="Correo" className={`${STATUS} w-[46px] justify-between px-[3px]`}>
          <Icon w={20} h={13}><path d="M1 1h18v11H1z" fill="#ddd" stroke="#333" /><path d="M16 2h2v2h-2z" fill="#e02a8c" /></Icon>
          <Caret up />
        </button>
      </div>
      <TaskBar />
      <VmStatus />
    </main>
  );
}

export default function App() {
  return (
    <div className="flex min-h-screen bg-white">
      <div className="flex min-w-0 flex-[1600_1_0%] flex-col">
        <Panel title="Estatus de Casos - Google Chrome" />
        <div className="flex grow">
          <Launcher />
          <ChromeWindow />
        </div>
      </div>
      <div className="flex min-w-0 flex-[1440_1_0%] flex-col">
        <Panel />
        <NotesWindow />
      </div>
    </div>
  );
}
